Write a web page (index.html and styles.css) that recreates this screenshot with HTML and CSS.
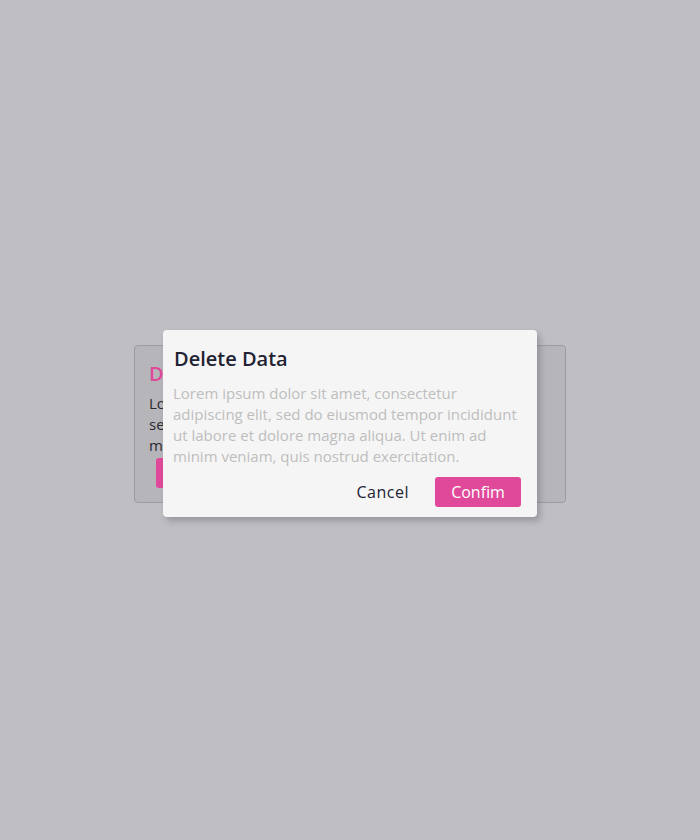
FILE: index.html
```html
<!DOCTYPE html>
<html lang="en">
<head>
<meta charset="utf-8">
<title>Delete Data</title>
<link rel="stylesheet" href="styles.css">
</head>
<body>
<div class="stage">
  <div class="card" aria-hidden="true">
    <h2 class="card-title">Delete Data</h2>
    <p class="card-text">Lorem ipsum dolor sit amet, consectetur adipiscing elit, sed do eiusmod tempor incididunt ut labore et dolore magna aliqua.</p>
    <div class="card-actions"><button class="card-btn">Open</button></div>
  </div>
  <div class="dialog" role="dialog">
    <h2 class="dialog-title">Delete Data</h2>
    <p class="dialog-text">Lorem ipsum dolor sit amet, consectetur adipiscing elit, sed do eiusmod tempor incididunt ut labore et dolore magna aliqua. Ut enim ad minim veniam, quis nostrud exercitation.</p>
    <div class="dialog-actions">
      <button class="btn btn-cancel">Cancel</button>
      <button class="btn btn-confirm">Confim</button>
    </div>
  </div>
</div>
</body>
</html>
```
FILE: styles.css
```css
html, body {
  margin: 0;
  height: 100%;
}
body {
  background: #bfbec3;
  font-family: "Open Sans", "DejaVu Sans", sans-serif;
}
.stage {
  height: 100%;
  box-sizing: border-box;
  padding-top: 7px;
  display: grid;
  place-items: center;
}
.card, .dialog {
  grid-area: 1 / 1;
}
.card {
  width: 432px;
  height: 158px;
  box-sizing: border-box;
  background: #b6b5ba;
  border: 1px solid #9c9ba0;
  border-radius: 4px;
  padding: 14px 14px;
  overflow: hidden;
}
.card-title {
  margin: 0 0 5px;
  font-size: 20px;
  font-weight: 600;
  color: #e0499a;
  line-height: 28px;
}
.card-text {
  margin: 0;
  font-size: 15px;
  line-height: 21px;
  color: #2a2a30;
}
.card-actions {
  margin-top: 2px;
  padding-left: 7px;
}
.card-btn {
  border: 0;
  background: #e0499a;
  color: #fff;
  height: 30px;
  width: 80px;
  border-radius: 3px;
}
.dialog {
  width: 374px;
  height: 187px;
  box-sizing: border-box;
  background: #f5f5f5;
  border-radius: 4px;
  box-shadow: 3px 4px 6px rgba(80, 80, 90, 0.35);
  padding: 15px 10px 10px;
  display: flex;
  flex-direction: column;
}
.dialog-title {
  margin: 0 0 10px 1px;
  font-size: 20px;
  font-weight: 600;
  line-height: 28px;
  color: #222233;
}
.dialog-text {
  margin: 0;
  font-size: 15px;
  line-height: 21px;
  color: #bebebe;
}
.dialog-actions {
  margin-top: auto;
  display: flex;
  justify-content: flex-end;
  align-items: center;
  gap: 26px;
  padding-right: 6px;
}
.btn {
  font-family: inherit;
  font-size: 16px;
  border: 0;
  height: 30px;
  border-radius: 3px;
  cursor: pointer;
}
.btn-cancel {
  background: transparent;
  color: #222233;
  padding: 0;
  letter-spacing: 0.5px;
}
.btn-confirm {
  background: #e0499a;
  color: #fff;
  width: 86px;
  padding: 0;
}
```
